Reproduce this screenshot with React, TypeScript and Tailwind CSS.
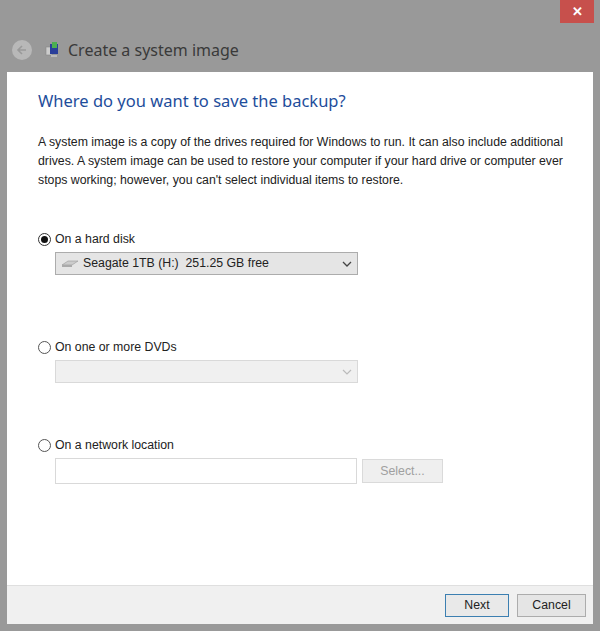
export default function App() {
  const f = { fontFamily: '"Liberation Sans", Arial, sans-serif' };
  const t = { fontFamily: '"Noto Sans", "Open Sans", sans-serif' };
  return (
    <div className="w-[600px] h-[631px] bg-[#999999] flex flex-col px-[7px] pb-[7px]" style={f}>
      <div className="h-[30px] flex justify-end">
        <div className="w-[34px] h-[23px] bg-[#c7504c] text-white flex items-center justify-center text-[13px] font-bold mr-[-1px]">✕</div>
      </div>
      <div className="h-[42px] flex items-center gap-[12px] pl-[5px] pb-[2px]">
        <div className="w-[20px] h-[20px] rounded-full bg-[#b8b8b8] flex items-center justify-center">
          <svg width="12" height="12" viewBox="0 0 12 12"><path d="M10 6H2M6 2L2 6l4 4" stroke="#999" strokeWidth="1.6" fill="none"/></svg>
        </div>
        <div className="flex items-center gap-[6px]">
          <svg width="18" height="18" viewBox="0 0 18 18">
            <rect x="2" y="6" width="6" height="8" fill="#ccc" stroke="#888" strokeWidth="0.6"/>
            <rect x="6" y="3" width="8" height="10" fill="#2a3f9a"/>
            <rect x="8" y="1" width="5" height="6" fill="#4caf50"/>
            <rect x="7" y="14" width="6" height="2" fill="#bbb"/>
          </svg>
          <span className="text-[16px] text-[#3a3a3a]" style={t}>Create a system image</span>
        </div>
      </div>
      <div className="flex-1 bg-white flex flex-col">
        <div className="flex-1 pl-[31px] pt-[17px]">
          <div className="text-[16.5px] leading-[24px] text-[#1e4d9b]" style={t}>Where do you want to save the backup?</div>
          <p className="mt-[20px] text-[12.3px] leading-[19px] text-[#222] w-[540px]">
            A system image is a copy of the drives required for Windows to run. It can also include additional drives. A system image can be used to restore your computer if your hard drive or computer ever stops working; however, you can't select individual items to restore.
          </p>
          <div className="mt-[40px]">
            <div className="flex items-center gap-[4px] text-[12.3px] text-[#222] h-[18px]">
              <div className="w-[13px] h-[13px] rounded-full border border-[#333] flex items-center justify-center"><div className="w-[7px] h-[7px] rounded-full bg-[#111]" /></div>
              On a hard disk
            </div>
            <div className="ml-[17px] mt-[4px] w-[303px] h-[23px] bg-[#e5e5e5] border border-[#acacac] flex items-center px-[5px] text-[12.3px] text-[#222]">
              <svg width="18" height="10" viewBox="0 0 18 10" className="mr-[4px]"><path d="M1 6l6-4h10l-6 4z" fill="#ccc" stroke="#999" strokeWidth="0.6"/><path d="M1 6h10v2H1z" fill="#aaa"/></svg>
              <span className="flex-1">Seagate 1TB (H:)&nbsp; 251.25 GB free</span>
              <svg width="10" height="6" viewBox="0 0 10 6"><path d="M1 1l4 4 4-4" stroke="#444" strokeWidth="1.3" fill="none"/></svg>
            </div>
          </div>
          <div className="mt-[63px]">
            <div className="flex items-center gap-[4px] text-[12.3px] text-[#222] h-[18px]">
              <div className="w-[13px] h-[13px] rounded-full border border-[#555]" />
              On one or more DVDs
            </div>
            <div className="ml-[17px] mt-[4px] w-[303px] h-[23px] bg-[#f0f0f0] border border-[#d9d9d9] flex items-center justify-end px-[5px]">
              <svg width="10" height="6" viewBox="0 0 10 6"><path d="M1 1l4 4 4-4" stroke="#bbb" strokeWidth="1.2" fill="none"/></svg>
            </div>
          </div>
          <div className="mt-[53px]">
            <div className="flex items-center gap-[4px] text-[12.3px] text-[#222] h-[18px]">
              <div className="w-[13px] h-[13px] rounded-full border border-[#555]" />
              On a network location
            </div>
            <div className="ml-[17px] mt-[4px] flex gap-[5px]">
              <div className="w-[302px] h-[26px] border border-[#d9d9d9] bg-white" />
              <div className="w-[81px] h-[24px] mt-[1px] bg-[#efefef] border border-[#dadada] flex items-center justify-center text-[12.3px] text-[#a0a0a0]">Select...</div>
            </div>
          </div>
        </div>
        <div className="h-[39px] bg-[#f0f0f0] border-t border-[#dfdfdf] flex justify-end items-center gap-[8px] pr-[7px]">
          <div className="w-[64px] h-[23px] border border-[#3c7fb1] bg-[#e9e9e9] flex items-center justify-center text-[12.3px] text-[#222]">Next</div>
          <div className="w-[69px] h-[23px] border border-[#acacac] bg-[#e5e5e5] flex items-center justify-center text-[12.3px] text-[#222]">Cancel</div>
        </div>
      </div>
    </div>
  );
}
